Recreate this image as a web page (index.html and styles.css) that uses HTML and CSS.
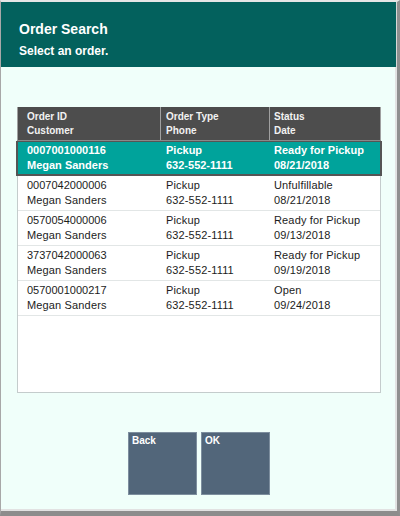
FILE: index.html
```html
<!DOCTYPE html>
<html>
<head>
<meta charset="utf-8">
<link rel="stylesheet" href="styles.css">
</head>
<body>
<div class="window">
  <header class="titlebar">
    <div class="title">Order Search</div>
    <div class="subtitle">Select an order.</div>
  </header>
  <main class="content">
    <div class="grid">
      <div class="row head">
        <div class="cell c1"><div>Order ID</div><div>Customer</div></div>
        <div class="cell c2"><div>Order Type</div><div>Phone</div></div>
        <div class="cell c3"><div>Status</div><div>Date</div></div>
      </div>
      <div class="row selected">
        <div class="cell c1"><div class="num">0007001000116</div><div>Megan Sanders</div></div>
        <div class="cell c2"><div>Pickup</div><div>632-552-1111</div></div>
        <div class="cell c3"><div>Ready for Pickup</div><div>08/21/2018</div></div>
      </div>
      <div class="row">
        <div class="cell c1"><div class="num">0007042000006</div><div>Megan Sanders</div></div>
        <div class="cell c2"><div>Pickup</div><div>632-552-1111</div></div>
        <div class="cell c3"><div>Unfulfillable</div><div>08/21/2018</div></div>
      </div>
      <div class="row">
        <div class="cell c1"><div class="num">0570054000006</div><div>Megan Sanders</div></div>
        <div class="cell c2"><div>Pickup</div><div>632-552-1111</div></div>
        <div class="cell c3"><div>Ready for Pickup</div><div>09/13/2018</div></div>
      </div>
      <div class="row">
        <div class="cell c1"><div class="num">3737042000063</div><div>Megan Sanders</div></div>
        <div class="cell c2"><div>Pickup</div><div>632-552-1111</div></div>
        <div class="cell c3"><div>Ready for Pickup</div><div>09/19/2018</div></div>
      </div>
      <div class="row">
        <div class="cell c1"><div class="num">0570001000217</div><div>Megan Sanders</div></div>
        <div class="cell c2"><div>Pickup</div><div>632-552-1111</div></div>
        <div class="cell c3"><div>Open</div><div>09/24/2018</div></div>
      </div>
    </div>
    <div class="buttons">
      <div class="btn">Back</div>
      <div class="btn">OK</div>
    </div>
  </main>
</div>
</body>
</html>
```
FILE: styles.css
```css
html, body {
  margin: 0;
  padding: 0;
  width: 400px;
  height: 516px;
  background: #8f8f8f;
  font-family: "Liberation Sans", Arial, sans-serif;
}
.window {
  box-sizing: border-box;
  width: 400px;
  height: 516px;
  display: flex;
  flex-direction: column;
  border-top: 2px solid #e6e6e6;
  border-left: 1px solid #a8a8a8;
  border-right: 3px solid #8f8f8f;
  border-bottom: 5px solid #8c8c8c;
  background: #f0fffa;
}
.titlebar {
  height: 65px;
  box-sizing: border-box;
  background: #03615d;
  color: #ffffff;
  padding: 18px 0 0 18px;
  border-right: 1px solid #d8d8d8;
}
.title {
  font-weight: bold;
  font-size: 14px;
  line-height: 18px;
}
.subtitle {
  font-weight: bold;
  font-size: 12px;
  line-height: 16px;
  margin-top: 5px;
}
.content {
  flex: 1;
  box-sizing: border-box;
  padding: 40px 14px 0 16px;
  border-right: 2px solid #e2e2e2;
  border-bottom: 2px solid #e2e2e2;
  display: flex;
  flex-direction: column;
}
.grid {
  box-sizing: border-box;
  height: 286px;
  background: #ffffff;
  border: 1px solid #c4cccc;
  border-top: none;
}
.row {
  display: grid;
  grid-template-columns: 143px 109px 1fr;
  box-sizing: border-box;
  height: 35px;
  padding: 2px 0;
  border-bottom: 1px solid #e2e6e6;
  font-size: 11px;
  line-height: 15px;
  color: #1c1c1c;
  letter-spacing: 0.15px;
}
.row.head {
  height: 34px;
  padding: 0;
  margin: 0 -1px;
  background: #4d4d4d;
  color: #f2f2f2;
  font-weight: bold;
  font-size: 10px;
  line-height: 14px;
  letter-spacing: 0;
  border-bottom: 1px solid #8a8a8a;
}
.row.head .cell {
  padding-top: 3px;
  border-left: 1px solid #a0a0a0;
}
.row.head .cell.c3 {
  border-right: 1px solid #a0a0a0;
}
.cell.c1 { padding-left: 9px; }
.cell.c2 { padding-left: 5px; }
.cell.c3 { padding-left: 4px; }
.num { letter-spacing: 0; }
.row.selected {
  background: #00a39b;
  color: #ffffff;
  font-weight: bold;
  letter-spacing: 0;
  border: 2px solid #555555;
  border-top: 1px solid #555555;
  margin: 0 -2px;
  padding: 1px 0 1px 0;
}
.buttons {
  display: flex;
  justify-content: center;
  gap: 4px;
  margin-top: 39px;
  padding-left: 0;
}
.btn {
  box-sizing: border-box;
  width: 69px;
  height: 63px;
  background: #52667a;
  border: 1px solid #7d8e9e;
  color: #ffffff;
  font-weight: bold;
  font-size: 10px;
  line-height: 12px;
  padding: 2px 0 0 3px;
}
```
